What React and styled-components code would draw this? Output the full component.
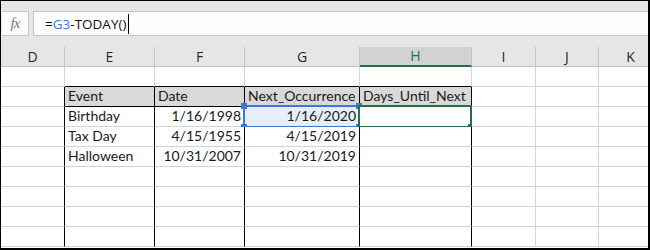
import React from 'react'
import styled, { createGlobalStyle } from 'styled-components'

const GlobalStyle = createGlobalStyle`
  body {
    margin: 0;
    background: #ffffff;
  }
`

const COLS = [
  { key: 'D', width: 64 },
  { key: 'E', width: 90 },
  { key: 'F', width: 90 },
  { key: 'G', width: 115 },
  { key: 'H', width: 112 },
  { key: 'I', width: 64 },
  { key: 'J', width: 63 },
  { key: 'K', width: 64 },
]

const TEMPLATE = COLS.map(c => c.width + 'px').join(' ')

const ROWS = [
  { cells: {} },
  { header: true, cells: { E: 'Event', F: 'Date', G: 'Next_Occurrence', H: 'Days_Until_Next' } },
  { cells: { E: 'Birthday', F: '1/16/1998', G: '1/16/2020', H: '' } },
  { cells: { E: 'Tax Day', F: '4/15/1955', G: '4/15/2019' } },
  { cells: { E: 'Halloween', F: '10/31/2007', G: '10/31/2019' } },
  { cells: {} },
  { cells: {} },
  { cells: {} },
  { cells: {} },
]

const TABLE_COLS = ['E', 'F', 'G', 'H']
const NUMERIC = ['F', 'G']

const Frame = styled.div`
  width: 650px;
  height: 250px;
  box-sizing: border-box;
  border-top: 1px solid #000;
  border-left: 1px solid #000;
  border-right: 2px solid #000;
  border-bottom: 2px solid #000;
  overflow: hidden;
  background: #ffffff;
  display: flex;
  flex-direction: column;
`

const FormulaBar = styled.div`
  height: 46px;
  flex-shrink: 0;
  background: #e6e6e6;
  display: flex;
  align-items: flex-start;
  gap: 4px;
  padding: 10px 0 0 1px;
  box-sizing: border-box;
`

const FxBox = styled.div`
  width: 27px;
  height: 25px;
  box-sizing: border-box;
  border: 1px solid #c6c6c6;
  border-left: none;
  background: #fdfdfd;
  display: flex;
  align-items: center;
  justify-content: center;
  font-family: "Liberation Serif", serif;
  font-style: italic;
  font-size: 15px;
  color: #7a7a7a;
  letter-spacing: -1px;
`

const FormulaInput = styled.div`
  flex: 1;
  height: 25px;
  box-sizing: border-box;
  border: 1px solid #c6c6c6;
  border-right: none;
  background: #fdfdfd;
  display: flex;
  align-items: center;
  padding-left: 11px;
  font-family: "Open Sans", sans-serif;
  font-size: 13.5px;
  color: #111;
`

const Ref = styled.span`
  color: #3c78d8;
`

const Caret = styled.span`
  display: inline-block;
  width: 1px;
  height: 20px;
  background: #000;
  margin-left: 2px;
`

const HeaderRow = styled.div`
  display: grid;
  grid-template-columns: ${TEMPLATE};
  height: 20px;
  flex-shrink: 0;
  background: #e6e6e6;
`

const ColLabel = styled.div`
  box-sizing: border-box;
  border-right: 1px solid #c3c3c3;
  border-bottom: ${p => (p.$active ? '2px solid #217346' : '1px solid #c3c3c3')};
  background: ${p => (p.$active ? '#d2d2d2' : '#e6e6e6')};
  color: ${p => (p.$active ? '#217346' : '#262626')};
  font-family: "Open Sans", sans-serif;
  font-size: 14px;
  display: flex;
  align-items: center;
  justify-content: center;
  line-height: 18px;
`

const GridRow = styled.div`
  display: grid;
  grid-template-columns: ${TEMPLATE};
  height: 20px;
  flex-shrink: 0;
`

const Cell = styled.div`
  position: relative;
  box-sizing: border-box;
  border-right: 1px solid ${p => p.$right};
  border-bottom: 1px solid ${p => p.$bottom};
  background: ${p => p.$bg};
  font-family: "Lato", sans-serif;
  font-size: 14px;
  color: #1a1a1a;
  display: flex;
  align-items: flex-end;
  justify-content: ${p => (p.$numeric ? 'flex-end' : 'flex-start')};
  padding: 0 3px 1px 3px;
  white-space: nowrap;
  line-height: 18px;
`

const RangeMark = styled.div`
  position: absolute;
  left: -2px;
  top: -2px;
  right: -1px;
  bottom: -2px;
  border: 2px solid ${p => p.$color};
  pointer-events: none;
`

const Handle = styled.div`
  position: absolute;
  width: 6px;
  height: 6px;
  background: ${p => p.$color};
  ${p => (p.$top ? 'top: -4px;' : 'bottom: -4px;')}
  ${p => (p.$left ? 'left: -4px;' : 'right: -4px;')}
`

const BLUE = '#3c78d8'
const GREEN = '#217346'

function renderCell(row, ri, col) {
  const inTable = ri >= 1
  const isTableCol = TABLE_COLS.includes(col)
  let right = '#d4d4d4'
  if (inTable && (col === 'D' || isTableCol)) right = '#000'
  let bottom = '#d4d4d4'
  if ((ri === 0 || ri === 1) && isTableCol) bottom = '#000'
  let bg = '#ffffff'
  if (row.header && isTableCol) bg = '#d9d9d9'
  const refCell = ri === 2 && col === 'G'
  const activeCell = ri === 2 && col === 'H'
  if (refCell) bg = '#e8eef9'
  const text = row.cells[col] || ''
  return (
    <Cell
      key={col}
      $right={right}
      $bottom={bottom}
      $bg={bg}
      $numeric={!row.header && NUMERIC.includes(col)}
    >
      {text}
      {refCell && (
        <RangeMark $color={BLUE}>
          <Handle $color={BLUE} $top $left />
          <Handle $color={BLUE} $left />
          <Handle $color={BLUE} $top />
          <Handle $color={BLUE} />
        </RangeMark>
      )}
      {activeCell && (
        <RangeMark $color={GREEN}>
          <Handle $color={GREEN} />
        </RangeMark>
      )}
    </Cell>
  )
}

export default function App() {
  return (
    <>
      <GlobalStyle />
      <Frame>
        <FormulaBar>
          <FxBox>fx</FxBox>
          <FormulaInput>
            =<Ref>G3</Ref>-TODAY()<Caret />
          </FormulaInput>
        </FormulaBar>
        <HeaderRow>
          {COLS.map(c => (
            <ColLabel key={c.key} $active={c.key === 'H'}>{c.key}</ColLabel>
          ))}
        </HeaderRow>
        {ROWS.map((row, ri) => (
          <GridRow key={ri}>
            {COLS.map(c => renderCell(row, ri, c.key))}
          </GridRow>
        ))}
      </Frame>
    </>
  )
}
